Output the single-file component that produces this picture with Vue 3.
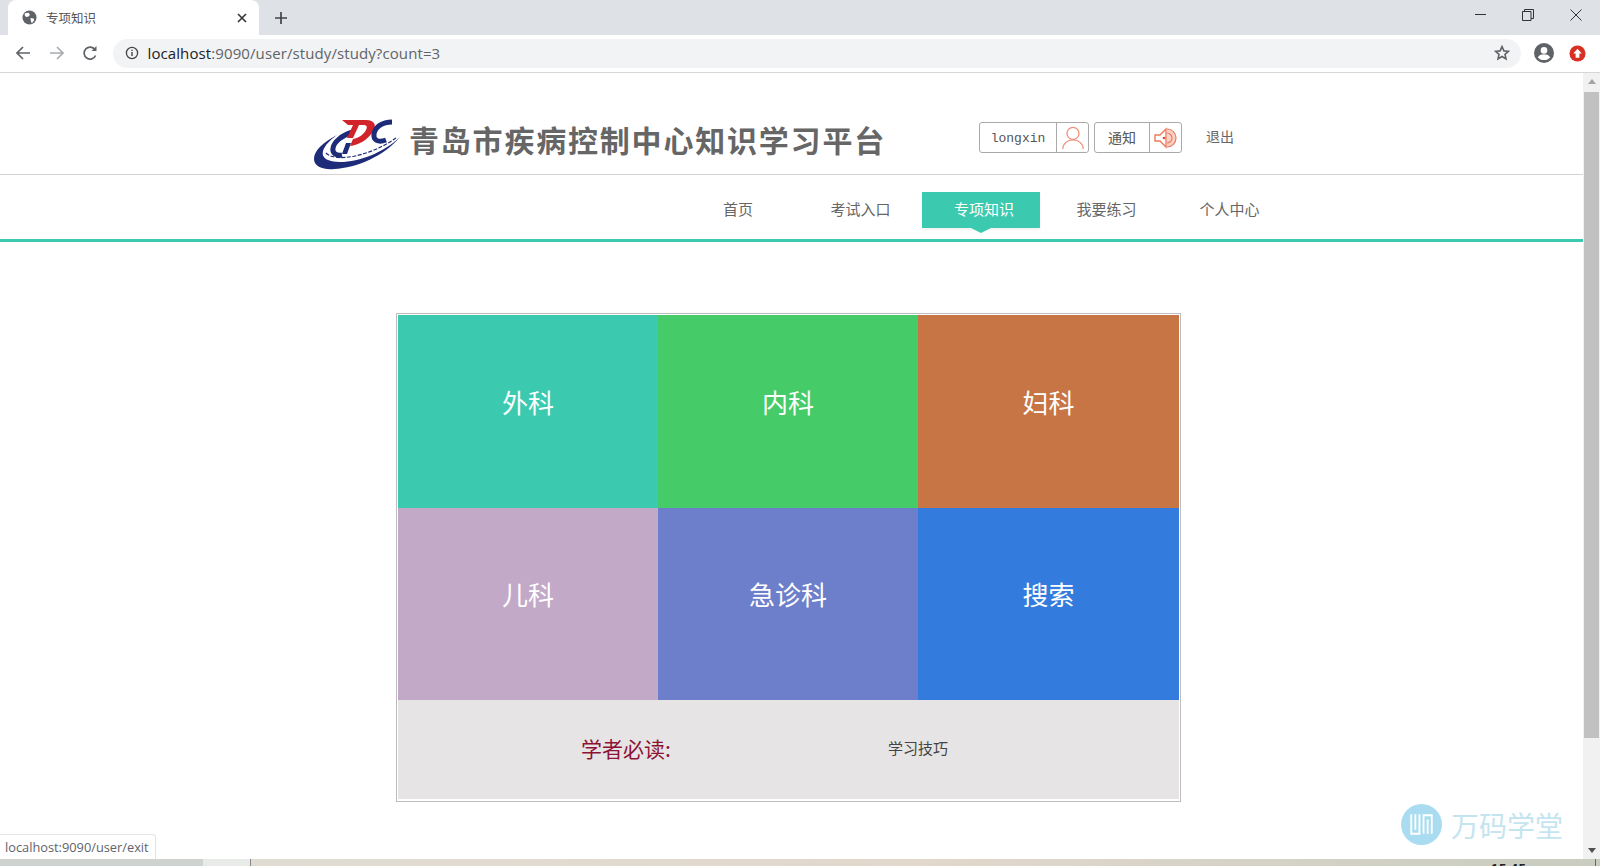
<script setup>
const tiles = [
  { name: '外科', color: '#3bcaaf' },
  { name: '内科', color: '#45cc69' },
  { name: '妇科', color: '#c87545' },
  { name: '儿科', color: '#c3a9c8' },
  { name: '急诊科', color: '#6d7fca' },
  { name: '搜索', color: '#337bdc' }
];

const menu = [
  { name: '首页' },
  { name: '考试入口' },
  { name: '专项知识', active: true },
  { name: '我要练习' },
  { name: '个人中心' }
];
</script>

<template>
  <div class="window">
    <div class="tabstrip">
      <div class="tab">
        <svg class="favicon" viewBox="0 0 16 16">
          <circle cx="8" cy="8" r="7.5" fill="#5f6368" />
          <path d="M3 3.5 7 3l1.5 2L7 7 4.5 7.5 3 6zM9 8.5l3.5.5.5 2-2.5 3-1-2z" fill="#fff" />
        </svg>
        <span class="tab-title">专项知识</span>
        <svg class="tab-close" viewBox="0 0 10 10"><path d="M1 1l8 8M9 1l-8 8" stroke="#333" stroke-width="1.6" /></svg>
      </div>
      <svg class="new-tab" viewBox="0 0 12 12"><path d="M6 0v12M0 6h12" stroke="#444" stroke-width="1.7" /></svg>
      <div class="win-controls">
        <svg viewBox="0 0 12 12"><path d="M1 5.500h11" stroke="#333" stroke-width="1" /></svg>
        <svg viewBox="0 0 12 12"><path d="M.5 2.500h8.500v9H.5zM2.500 2.500V.5h9v9H9" fill="none" stroke="#333" stroke-width="1" /></svg>
        <svg viewBox="0 0 12 12"><path d="M.5.5l11 11M11.500.5l-11 11" stroke="#333" stroke-width="1" /></svg>
      </div>
    </div>

    <div class="toolbar">
      <svg class="nav-ico" viewBox="0 0 16 16"><path d="M15 8H2M8 2 2 8l6 6" fill="none" stroke="#5f6368" stroke-width="1.7" /></svg>
      <svg class="nav-ico" viewBox="0 0 16 16"><path d="M1 8h13M8 2l6 6-6 6" fill="none" stroke="#a8abaf" stroke-width="1.7" /></svg>
      <svg class="nav-ico" viewBox="0 0 16 16"><path d="M13.600 10.500A6 6 0 1 1 13 4.600" fill="none" stroke="#5f6368" stroke-width="1.7" /><path d="M14.500 1v5h-5z" fill="#5f6368" /></svg>
      <div class="omnibox">
        <svg class="info-ico" viewBox="0 0 14 14">
          <circle cx="7" cy="7" r="5.600" fill="none" stroke="#444" stroke-width="1.3" />
          <path d="M7 6v4M7 3.800v1.200" stroke="#444" stroke-width="1.4" />
        </svg>
        <span class="url"><b>localhost</b>:9090/user/study/study?count=3</span>
        <svg class="star" viewBox="0 0 16 16"><path d="M8 1.600l1.900 4.300 4.600.4-3.500 3 1 4.600L8 11.500l-4 2.400 1-4.600-3.500-3 4.600-.4z" fill="none" stroke="#5f6368" stroke-width="1.6" /></svg>
      </div>
      <svg class="avatar" viewBox="0 0 20 20">
        <circle cx="10" cy="10" r="10" fill="#5f6368" />
        <circle cx="10" cy="7.400" r="3.300" fill="#fff" />
        <path d="M3.800 14.200c1.600-2.300 4-2.900 6.200-2.900s4.600.6 6.200 2.900C14.800 16.200 12.500 17 10 17s-4.800-.8-6.200-2.800z" fill="#fff" />
      </svg>
      <svg class="update" viewBox="0 0 18 18">
        <circle cx="9" cy="9" r="8.500" fill="#d93025" />
        <path d="M9 4l4.500 5H11v4.500H7V9H4.500z" fill="#fff" />
      </svg>
    </div>

    <div class="viewport">
      <div class="page">
        <header class="top">
          <div class="top-inner">
            <svg class="logo" viewBox="0 0 90 52">
              <path d="M25 17C10 25 2 33 2 41c0 8 10 11 20 10 23-1 50-13 66-32C72 34 48 44 28 44 16 44 9 40 11 33c2-6 7-11 14-16z" fill="#1d2b78" />
              <path d="M14 35c8 9 41 5 70-15" fill="none" stroke="#1d2b78" stroke-width="1.200" stroke-dasharray="4 1.500" />
              <path d="M41 14C30 17 22 24 21 30c-1 5 3 8 9 7" fill="none" stroke="#1d2b78" stroke-width="5" />
              <path d="M34 25h5l-4 11h-5z" fill="#1d2b78" />
              <path d="M30 2h24c10 0 11 7 6 13-5 7-13 12-22 13l3-7c6-1 11-5 13-9 2-4 0-5-3-5h-4l-6 13h-6l6-13h-5z" fill="#d2232a" />
              <path d="M80 4C70 4 63 9 62 16c-1 6 4 9 12 6" fill="none" stroke="#1d2b78" stroke-width="5" />
            </svg>
            <h1 class="site-name">青岛市疾病控制中心知识学习平台</h1>
            <div class="user-box">
              <div class="chip">
                <span class="chip-text mono">longxin</span>
                <span class="chip-ico">
                  <svg viewBox="0 0 24 26"><circle cx="12" cy="8" r="6.500" fill="none" stroke="#f0907a" stroke-width="1.400" /><path d="M1 25c0-6 5-10 11-10s11 4 11 10" fill="none" stroke="#f0907a" stroke-width="1.400" /></svg>
                </span>
              </div>
              <div class="chip">
                <span class="chip-text notice">通知</span>
                <span class="chip-ico">
                  <svg viewBox="0 0 24 22"><path d="M1 8h5l6-6v18l-6-6H1z" fill="none" stroke="#ef7a5e" stroke-width="1.400" /><path d="M13 2a9 9 0 0 1 0 18M13 6a5 5 0 0 1 0 10" fill="#fbd3c6" stroke="#ef7a5e" stroke-width="1.200" /><circle cx="10" cy="11" r="1.300" fill="#e5492d" /></svg>
                </span>
              </div>
              <a class="logout">退出</a>
            </div>
          </div>
        </header>

        <nav class="menu">
          <div class="menu-inner">
            <div v-for="item in menu" :key="item.name" class="menu-item" :class="{ active: item.active }">{{ item.name }}</div>
          </div>
        </nav>

        <section class="panel">
          <div class="grid">
            <div v-for="t in tiles" :key="t.name" class="tile" :style="{ background: t.color }">{{ t.name }}</div>
          </div>
          <div class="must-read">
            <span class="must-title">学者必读:</span>
            <span class="must-link">学习技巧</span>
          </div>
        </section>
      </div>

      <div class="scrollbar">
        <span class="arrow up"></span>
        <div class="track"><div class="thumb"></div></div>
        <span class="arrow down"></span>
      </div>

      <div class="watermark">
        <svg viewBox="0 0 40 40">
          <circle cx="20" cy="20" r="20" fill="#a9dcf0" />
          <path d="M10 10v19h8V10M14 10v15M22 29V11h8v18M26 29V15" fill="none" stroke="#fff" stroke-width="1.800" />
        </svg>
        <span>万码学堂</span>
      </div>
      <div class="status">localhost:9090/user/exit</div>
    </div>

    <div class="desktop">
      <div class="d1"></div>
      <div class="d2"></div>
      <div class="d3">
        <span class="clock">15:45</span>
        <i class="tick"></i>
      </div>
    </div>
  </div>
</template>

<style>
html, body {
  margin: 0;
  overflow: hidden;
}
</style>

<style scoped>
.window {
  width: 1600px;
  height: 866px;
  display: flex;
  flex-direction: column;
  overflow: hidden;
  font-family: "Noto Sans CJK SC", "Liberation Sans", sans-serif;
  background: #fff;
}

.tabstrip {
  height: 35px;
  background: #dee1e6;
  display: flex;
  align-items: flex-end;
  flex-shrink: 0;
}

.tab {
  width: 251px;
  height: 35px;
  margin-left: 8px;
  background: #fff;
  border-radius: 8px 8px 0 0;
  display: flex;
  align-items: center;
  padding: 0 12px 0 14px;
  box-sizing: border-box;
}

.favicon {
  width: 15px;
  height: 15px;
}

.tab-title {
  margin-left: 9px;
  font-size: 12.5px;
  color: #555;
  flex: 1;
}

.tab-close {
  width: 10px;
  height: 10px;
}

.new-tab {
  width: 12px;
  height: 12px;
  margin: 0 0 11px 16px;
}

.win-controls {
  margin-left: auto;
  align-self: flex-start;
  display: flex;
  gap: 36px;
  padding: 9px 18px 0 0;
}

.win-controls svg {
  width: 12px;
  height: 12px;
}

.toolbar {
  height: 38px;
  display: flex;
  align-items: center;
  border-bottom: 1px solid #d6d7d9;
  background: #fff;
  padding: 0 0 1px 15px;
  box-sizing: border-box;
  flex-shrink: 0;
}

.nav-ico {
  width: 16px;
  height: 16px;
  margin-right: 17.5px;
}

.omnibox {
  width: 1408px;
  height: 29px;
  margin-left: -3px;
  border-radius: 15px;
  background: #f1f3f4;
  display: flex;
  align-items: center;
  padding: 0 11px 0 12px;
  box-sizing: border-box;
}

.info-ico {
  width: 14px;
  height: 14px;
}

.url {
  margin: 0 0 1px 9px;
  font-family: "Open Sans", "Liberation Sans", sans-serif;
  font-size: 15px;
  color: #5f6368;
  flex: 1;
  letter-spacing: 0.1px;
}

.url b {
  font-weight: 400;
  color: #202124;
}

.star {
  width: 16px;
  height: 16px;
}

.avatar {
  width: 20px;
  height: 20px;
  margin-left: 13px;
}

.update {
  width: 17px;
  height: 17px;
  margin-left: 15px;
}

.viewport {
  flex: 1;
  display: flex;
  position: relative;
  min-height: 0;
}

.page {
  flex: 1;
  min-width: 0;
}

.top {
  height: 102px;
  border-bottom: 1px solid #d2d2d2;
  box-sizing: border-box;
}

.top-inner {
  display: flex;
  align-items: flex-start;
  padding: 45px 0 0 312px;
}

.logo {
  width: 90px;
  height: 52px;
}

.site-name {
  margin: -1px 0 0 7px;
  font-size: 30px;
  line-height: 44px;
  letter-spacing: 1.8px;
  font-weight: 700;
  color: #666;
  white-space: nowrap;
}

.user-box {
  display: flex;
  align-items: center;
  margin: 4px 0 0 93px;
}

.chip {
  height: 31px;
  display: flex;
  border: 1px solid #aaa;
  border-radius: 3px;
  box-sizing: border-box;
  margin-right: 5px;
}

.chip-text {
  display: flex;
  align-items: center;
  justify-content: center;
  font-size: 14px;
  color: #555;
  border-right: 1px solid #aaa;
  box-sizing: border-box;
}

.mono {
  width: 77px;
  padding-top: 2px;
  font-size: 13px;
  font-family: "Liberation Mono", monospace;
}

.notice {
  width: 55px;
  padding-bottom: 2px;
}

.chip-ico {
  width: 31px;
  display: flex;
  align-items: center;
  justify-content: center;
}

.chip-ico svg {
  width: 24px;
  height: 24px;
}

.logout {
  margin: 0 0 3px 19px;
  font-size: 14px;
  color: #666;
}

.menu {
  height: 67px;
  border-bottom: 3px solid #3bcaaf;
  box-sizing: border-box;
}

.menu-inner {
  display: flex;
  padding: 17px 0 0 677px;
}

.menu-item {
  width: 123px;
  height: 36px;
  line-height: 33px;
  text-align: center;
  font-size: 15px;
  color: #666;
  position: relative;
}

.menu-item:first-child {
  width: 122px;
}

.active {
  width: 118px;
  margin: 0 5px 0 0;
  padding-left: 6px;
  box-sizing: border-box;
  background: #3bcaaf;
  color: #fff;
  box-shadow: 0 2px 3px rgba(0, 0, 0, 0.06);
}

.active::after {
  content: "";
  position: absolute;
  left: 50%;
  top: 36px;
  margin-left: -10px;
  border: 10px solid transparent;
  border-top: 5px solid #3bcaaf;
  border-bottom: 0;
}

.panel {
  width: 785px;
  height: 489px;
  margin: 71px 0 0 396px;
  padding: 1px 1px 1px;
  border: 1px solid #bdbdbd;
  box-sizing: border-box;
}

.grid {
  display: grid;
  grid-template-columns: 260px 260px 261px;
  grid-template-rows: 193px 192px;
}

.tile {
  display: flex;
  align-items: center;
  justify-content: center;
  padding-bottom: 21px;
  box-sizing: border-box;
  color: #fff;
  font-size: 26px;
}

.must-read {
  height: 99px;
  background: #e6e4e5;
  display: flex;
  align-items: center;
  padding: 0 0 4px 183px;
  box-sizing: border-box;
}

.must-title {
  width: 307px;
  font-size: 21px;
  color: #8d1236;
}

.must-link {
  font-size: 15px;
  color: #444;
}

.scrollbar {
  width: 17px;
  flex-shrink: 0;
  background: #f1f1f1;
  display: flex;
  flex-direction: column;
  align-items: center;
}

.arrow {
  width: 0;
  height: 0;
  flex-shrink: 0;
  border: 4px solid transparent;
}

.up {
  margin: 6px 0;
  border-top: 0;
  border-bottom: 5px solid #a3a3a3;
}

.down {
  margin: 6px 0;
  border-bottom: 0;
  border-top: 5px solid #505050;
}

.track {
  flex: 1;
  width: 100%;
}

.thumb {
  height: 646px;
  margin: 2px 1px 0;
  background: #c1c1c1;
}

.watermark {
  position: absolute;
  left: 1401px;
  top: 731px;
  display: flex;
  align-items: center;
  gap: 9px;
  font-size: 28px;
  color: #c4e5ef;
}

.watermark svg {
  width: 41px;
  height: 41px;
}

.status {
  position: absolute;
  left: 0;
  bottom: 0;
  height: 24px;
  line-height: 24px;
  padding: 0 6px 0 5px;
  background: #fff;
  border: 1px solid #e4e4e4;
  border-width: 1px 1px 0 0;
  border-radius: 0 4px 0 0;
  font-family: "Open Sans", "Liberation Sans", sans-serif;
  font-size: 12.8px;
  color: #5f6368;
}

.desktop {
  height: 7px;
  display: flex;
  flex-shrink: 0;
  overflow: hidden;
}

.d1 {
  width: 203px;
  background: #cfd3cf;
}

.d2 {
  width: 47px;
  background: #e8ebe8;
  border-right: 1px solid #888;
}

.d3 {
  flex: 1;
  display: flex;
  background: linear-gradient(90deg, #e0dcd3, #e2d8cc 50%, #c9ccc0);
}

.clock {
  margin: 3px 0 0 1240px;
  font-size: 13px;
  line-height: 13px;
  font-weight: 700;
  color: #222;
}

.tick {
  width: 1px;
  margin: 0 4px 0 auto;
  background: #666;
}
</style>
